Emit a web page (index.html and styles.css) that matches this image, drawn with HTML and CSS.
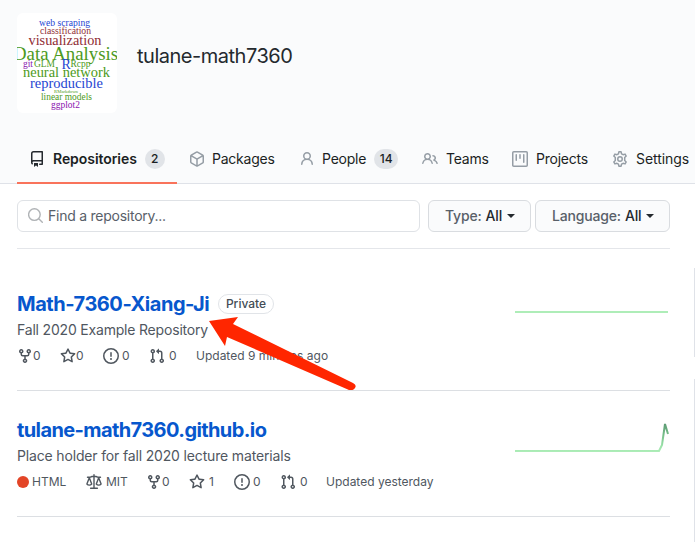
FILE: index.html
```html
<!DOCTYPE html>
<html lang="en">
<head>
<meta charset="utf-8">
<title>tulane-math7360</title>
<link rel="stylesheet" href="styles.css">
</head>
<body>
<svg class="sprite" width="0" height="0">
  <symbol id="repo" viewBox="0 0 16 16"><path fill-rule="evenodd" d="M2 2.5A2.5 2.5 0 014.5 0h8.75a.75.75 0 01.75.75v12.5a.75.75 0 01-.75.75h-2.5a.75.75 0 110-1.5h1.75v-2h-8a1 1 0 00-.714 1.7.75.75 0 01-1.072 1.05A2.495 2.495 0 012 11.5v-9zm10.5-1V9h-8c-.356 0-.694.074-1 .208V2.5a1 1 0 011-1h8zM5 12.25v3.25a.25.25 0 00.4.2l1.45-1.087a.25.25 0 01.3 0L8.6 15.7a.25.25 0 00.4-.2v-3.25a.25.25 0 00-.25-.25h-3.5a.25.25 0 00-.25.25z"/></symbol>
  <symbol id="package" viewBox="0 0 16 16"><path fill-rule="evenodd" d="M8.878.392a1.75 1.75 0 00-1.756 0l-5.25 3.045A1.75 1.75 0 001 4.951v6.098c0 .624.332 1.2.872 1.514l5.25 3.045a1.75 1.75 0 001.756 0l5.25-3.045c.54-.313.872-.89.872-1.514V4.951c0-.624-.332-1.2-.872-1.514L8.878.392zM7.875 1.69a.25.25 0 01.25 0l4.63 2.685L8 7.133 3.245 4.375l4.63-2.685zM2.5 5.677v5.372c0 .09.047.171.125.216l4.625 2.683V8.432L2.5 5.677zm6.25 8.271l4.625-2.683a.25.25 0 00.125-.216V5.677L8.75 8.432v5.516z"/></symbol>
  <symbol id="person" viewBox="0 0 16 16"><path fill-rule="evenodd" d="M10.5 5a2.5 2.5 0 11-5 0 2.5 2.5 0 015 0zm.061 3.073a4 4 0 10-5.123 0 6.004 6.004 0 00-3.431 5.142.75.75 0 001.498.07 4.5 4.5 0 018.99 0 .75.75 0 101.498-.07 6.005 6.005 0 00-3.432-5.142z"/></symbol>
  <symbol id="people" viewBox="0 0 16 16"><path fill-rule="evenodd" d="M5.5 3.5a2 2 0 100 4 2 2 0 000-4zM2 5.5a3.5 3.5 0 115.898 2.549 5.507 5.507 0 013.034 4.084.75.75 0 11-1.482.235 4.001 4.001 0 00-7.9 0 .75.75 0 01-1.482-.236A5.507 5.507 0 013.102 8.05 3.49 3.49 0 012 5.5zM11 4a.75.75 0 100 1.5 1.5 1.5 0 01.666 2.844.75.75 0 00-.416.672v.352a.75.75 0 00.574.73c1.2.289 2.162 1.2 2.522 2.372a.75.75 0 101.434-.44 5.01 5.01 0 00-2.56-3.012A3 3 0 0011 4z"/></symbol>
  <symbol id="project" viewBox="0 0 16 16"><path fill-rule="evenodd" d="M1.75 0A1.75 1.75 0 000 1.75v12.5C0 15.216.784 16 1.75 16h12.5A1.75 1.75 0 0016 14.250V1.75A1.75 1.75 0 0014.25 0H1.75zM1.5 1.75a.25.25 0 01.25-.25h12.500a.25.25 0 01.25.25v12.500a.25.25 0 01-.25.25H1.750a.25.25 0 01-.25-.25V1.750zM11.750 3a.75.75 0 00-.75.75v7.500a.75.75 0 001.500 0v-7.500a.75.75 0 00-.75-.75zm-8.250.75a.75.75 0 011.500 0v5.500a.75.75 0 01-1.500 0v-5.500zM8 3a.75.75 0 00-.75.75v3.500a.75.75 0 001.500 0v-3.500A.75.75 0 008 3z"/></symbol>
  <symbol id="gear" viewBox="0 0 16 16"><g fill="none" stroke="currentColor" stroke-width="1.5" stroke-linejoin="round"><path d="M6.900 .8h2.200l.45 2 1.550.9 1.950-.6 1.150 1.950-1.500 1.400v3.100l1.500 1.400-1.150 1.950-1.950-.6-1.550.9-.45 2H6.900l-.45-2-1.550-.9-1.950.6-1.150-1.950 1.500-1.400v-3.100l-1.500-1.400 1.150-1.950 1.950.6 1.550-.9z"/><circle cx="8" cy="8" r="2.250"/></g></symbol>
  <symbol id="search" viewBox="0 0 16 16"><path fill="none" stroke="currentColor" stroke-width="1.400" stroke-linecap="round" d="M10.500 10.500l3.800 3.800M12.200 6.600A5.800 5.800 0 11.600 6.600a5.800 5.800 0 0111.600 0z"/></symbol>
  <symbol id="fork" viewBox="0 0 16 16"><path fill-rule="evenodd" d="M5 3.250a.75.75 0 11-1.500 0 .75.75 0 011.500 0zm0 2.122a2.250 2.250 0 10-1.500 0v.878A2.250 2.250 0 005.750 8.500h1.500v2.128a2.251 2.251 0 101.500 0V8.500h1.500a2.250 2.250 0 002.250-2.250v-.878a2.250 2.250 0 10-1.500 0v.878a.75.75 0 01-.75.75h-4.500A.75.75 0 015 6.250v-.878zm3.750 7.378a.75.75 0 11-1.500 0 .75.75 0 011.500 0zm3-8.750a.75.75 0 100-1.500.75.75 0 000 1.500z"/></symbol>
  <symbol id="star" viewBox="0 0 16 16"><path fill-rule="evenodd" d="M8 .25a.75.75 0 01.673.418l1.882 3.815 4.210.612a.75.75 0 01.416 1.279l-3.046 2.970.719 4.192a.75.75 0 01-1.088.791L8 12.347l-3.766 1.980a.75.75 0 01-1.088-.790l.720-4.194L.818 6.374a.75.75 0 01.416-1.280l4.210-.611L7.327.668A.75.75 0 018 .25zm0 2.445L6.615 5.500a.75.75 0 01-.564.410l-3.097.450 2.240 2.184a.75.75 0 01.216.664l-.528 3.084 2.769-1.456a.75.75 0 01.698 0l2.770 1.456-.530-3.084a.75.75 0 01.216-.664l2.240-2.183-3.096-.450a.75.75 0 01-.564-.410L8 2.694v.001z"/></symbol>
  <symbol id="issue" viewBox="0 0 16 16"><path fill-rule="evenodd" d="M8 1.500a6.500 6.500 0 100 13 6.500 6.500 0 000-13zM0 8a8 8 0 1116 0A8 8 0 010 8zm9 3a1 1 0 11-2 0 1 1 0 012 0zm-.25-6.250a.75.75 0 00-1.500 0v3.500a.75.75 0 001.500 0v-3.500z"/></symbol>
  <symbol id="pull" viewBox="0 0 16 16"><path fill-rule="evenodd" d="M7.177 3.073L9.573.677A.25.25 0 0110 .854v4.792a.25.25 0 01-.427.177L7.177 3.427a.25.25 0 010-.354zM3.750 2.500a.75.75 0 100 1.500.75.75 0 000-1.500zm-2.250.750a2.250 2.250 0 113 2.122v5.256a2.251 2.251 0 11-1.500 0V5.372A2.250 2.250 0 011.500 3.250zM11 2.500h-1V4h1a1 1 0 011 1v5.628a2.251 2.251 0 101.500 0V5A2.500 2.500 0 0011 2.500zm1 10.250a.75.75 0 111.500 0 .75.75 0 01-1.500 0zM3.750 12a.75.75 0 100 1.500.75.75 0 000-1.500z"/></symbol>
  <symbol id="law" viewBox="0 0 16 16"><path fill="none" stroke="currentColor" stroke-width="1.400" stroke-linecap="round" stroke-linejoin="round" d="M8 .8v13M4.600 14.200h6.800M1.500 3.300h2.200L6 2.500h4l2.300.8h2.200M3.300 3.800L.9 10c1.200 1.500 3.600 1.500 4.800 0L3.300 3.800zM12.700 3.800L10.300 10c1.200 1.500 3.600 1.500 4.800 0l-2.400-6.200z"/></symbol>
</svg>

<header class="header">
  <div class="org">
    <svg class="avatar" viewBox="0 0 100 100" role="img">
      <rect width="100" height="100" fill="#fff"/>
      <g class="cloud">
        <text class="blue" x="22" y="13" font-size="10" textLength="51" lengthAdjust="spacingAndGlyphs">web scraping</text>
        <text class="maroon" x="23" y="21" font-size="9.500" textLength="51" lengthAdjust="spacingAndGlyphs">classification</text>
        <text class="maroon" x="11.500" y="32" font-size="14" textLength="73" lengthAdjust="spacingAndGlyphs">visualization</text>
        <text class="green" x="-4" y="46.500" font-size="19" textLength="105" lengthAdjust="spacingAndGlyphs">Data Analysis</text>
        <text class="purple" x="6" y="54" font-size="11" textLength="10" lengthAdjust="spacingAndGlyphs">git</text>
        <text class="green" x="17" y="54" font-size="10.500" textLength="21" lengthAdjust="spacingAndGlyphs">GLM</text>
        <text class="blue" x="44.500" y="56" font-size="14">R</text>
        <text class="green" x="53.500" y="54" font-size="10.500" textLength="20" lengthAdjust="spacingAndGlyphs">Rcpp</text>
        <text class="green" x="6" y="63.500" font-size="14.500" textLength="87" lengthAdjust="spacingAndGlyphs">neural network</text>
        <text class="blue" x="13" y="75" font-size="14.500" textLength="73" lengthAdjust="spacingAndGlyphs">reproducible</text>
        <text class="green" x="37" y="79.500" font-size="4.500" textLength="24" lengthAdjust="spacingAndGlyphs">RMarkdown</text>
        <text class="green" x="24" y="86.500" font-size="10" textLength="51" lengthAdjust="spacingAndGlyphs">linear models</text>
        <text class="purple" x="34" y="94.500" font-size="10.500" textLength="29" lengthAdjust="spacingAndGlyphs">ggplot2</text>
      </g>
    </svg>
    <h1 class="org-name">tulane-math7360</h1>
  </div>
  <nav class="tabs">
    <a class="tab selected"><svg class="icon"><use href="#repo"/></svg><span class="label">Repositories</span><span class="counter">2</span></a>
    <a class="tab"><svg class="icon"><use href="#package"/></svg><span class="label">Packages</span></a>
    <a class="tab"><svg class="icon"><use href="#person"/></svg><span class="label">People</span><span class="counter wide">14</span></a>
    <a class="tab"><svg class="icon"><use href="#people"/></svg><span class="label">Teams</span></a>
    <a class="tab"><svg class="icon"><use href="#project"/></svg><span class="label">Projects</span></a>
    <a class="tab"><svg class="icon"><use href="#gear"/></svg><span class="label last">Settings</span></a>
  </nav>
</header>

<div class="layout">
  <main class="main">
    <div class="filters">
      <div class="search"><svg class="icon"><use href="#search"/></svg><span>Find a repository...</span></div>
      <div class="btn type"><span>Type:</span><b>All</b><i class="caret"></i></div>
      <div class="btn language"><span>Language:</span><b>All</b><i class="caret"></i></div>
    </div>

    <article class="repo">
      <div class="info">
        <h3 class="title"><a class="name-a">Math-7360-Xiang-Ji</a><span class="private">Private</span></h3>
        <p class="desc desc-a">Fall 2020 Example Repository</p>
        <div class="meta meta-a">
          <span><svg class="icon"><use href="#fork"/></svg>0</span>
          <span><svg class="icon"><use href="#star"/></svg>0</span>
          <span><svg class="icon"><use href="#issue"/></svg>0</span>
          <span><svg class="icon"><use href="#pull"/></svg>0</span>
          <span>Updated 9 minutes ago</span>
        </div>
      </div>
      <svg class="spark flat" viewBox="0 0 155 34"><path d="M0 31h153" stroke="#aeedb8" stroke-width="2"/></svg>
      <svg class="arrow" viewBox="0 0 152 76"><path fill="#ff2600" d="M1 7L30 3l-5 7 120 59q4 2 2 5-2 3-6 2L19 23l-2 9z"/></svg>
    </article>

    <article class="repo">
      <div class="info">
        <h3 class="title"><a class="name-b">tulane-math7360.github.io</a></h3>
        <p class="desc desc-b">Place holder for fall 2020 lecture materials</p>
        <div class="meta meta-b">
          <span><i class="dot"></i>HTML</span>
          <span><svg class="icon"><use href="#law"/></svg>MIT</span>
          <span><svg class="icon"><use href="#fork"/></svg>0</span>
          <span><svg class="icon"><use href="#star"/></svg>1</span>
          <span><svg class="icon"><use href="#issue"/></svg>0</span>
          <span><svg class="icon"><use href="#pull"/></svg>0</span>
          <span>Updated yesterday</span>
        </div>
      </div>
      <svg class="spark" viewBox="0 0 155 34">
        <defs><linearGradient id="activity" gradientUnits="userSpaceOnUse" x1="0" y1="32" x2="0" y2="3"><stop offset="0" stop-color="#aeedb8"/><stop offset=".2" stop-color="#9be3aa"/><stop offset=".6" stop-color="#75bd88"/><stop offset="1" stop-color="#5c9874"/></linearGradient></defs>
        <path d="M0 31H144L147 25 150 4 153 14" fill="none" stroke="url(#activity)" stroke-width="2"/>
      </svg>
    </article>
  </main>
  <aside class="side"><div class="box first"></div><div class="box second"></div></aside>
</div>
</body>
</html>
```

FILE: styles.css
```css
* { box-sizing: border-box; }
body {
  margin: 0;
  width: 695px;
  height: 542px;
  overflow: hidden;
  background: #fff;
  color: #24292e;
  font: 14px/20px Inter, "Liberation Sans", sans-serif;
}
h1, h3, p { margin: 0; }
.sprite { position: absolute; }
.icon { width: 16px; height: 16px; fill: currentColor; flex: none; }

.header {
  height: 184px;
  background: #fafbfc;
  border-bottom: 1px solid #dfe2e8;
}
.org { display: flex; padding: 13px 0 0 17px; height: 135px; }
.avatar { width: 100px; height: 100px; border-radius: 6px; flex: none; }
.cloud { font-family: "Liberation Serif", serif; }
.blue { fill: #2545d2; }
.maroon { fill: #8f2d35; }
.green { fill: #4d9a22; }
.purple { fill: #8a14ae; }
.org-name { margin: 28px 0 0 20px; font-size: 20px; font-weight: 400; line-height: 30px; letter-spacing: -.48px; }

.tabs {
  display: grid;
  grid-template-columns: 160px 110px 123px 90px 100px 112px;
  margin-left: 17px;
  height: 49px;
}
.tab { display: flex; align-items: center; padding: 0 0 0 12px; border-bottom: 2px solid transparent; color: #1b1f23; letter-spacing: -.24px; }
.tab .icon { margin-right: 8px; color: #959da5; }
.tab:nth-child(2) .label { margin-left: -1px; }
.tab:nth-child(3) .icon { margin-right: 7px; }
.tab.selected { border-color: #f9735b; font-weight: 600; letter-spacing: -.06px; }
.tab.selected .icon { color: #24292e; }
.label.last { letter-spacing: -.06px; }
.counter {
  margin-left: 8px;
  width: 20px;
  height: 20px;
  border-radius: 10px;
  background: #e1e4e8;
  font-size: 12px;
  font-weight: 500;
  letter-spacing: 0;
  text-align: center;
}
.counter.wide { width: 24px; }

.layout { display: flex; justify-content: space-between; }
.main { width: 653px; margin-left: 17px; }
.filters { display: flex; height: 65px; padding-top: 16px; border-bottom: 1px solid #e4e6ea; }
.search {
  display: flex;
  align-items: center;
  width: 403px;
  height: 32px;
  padding-left: 10px;
  border: 1px solid #dfe2e6;
  border-radius: 6px;
  color: #586069;
  letter-spacing: -.25px;
}
.search .icon { margin-right: 4px; color: #b0b3b6; }
.btn {
  display: flex;
  align-items: center;
  height: 32px;
  padding-left: 16px;
  border: 1px solid #d9dce0;
  border-radius: 6px;
  background: #fafbfc;
  color: #586069;
  font-weight: 500;
  letter-spacing: -.17px;
}
.type { width: 103px; margin-left: 8px; }
.language { width: 135px; margin-left: 4px; }
.btn b { margin-left: 4px; color: #24292e; font-weight: 500; }
.caret { margin-left: 5px; border: 4px solid transparent; border-top-color: #24292e; border-bottom: 0; }

.repo { position: relative; display: flex; justify-content: space-between; height: 126px; border-bottom: 1px solid #dcdfe3; }
.repo:first-of-type { height: 142px; padding-top: 16px; }
.info { padding-top: 24px; }
.title { display: flex; align-items: center; height: 30px; font-size: 20px; line-height: 30px; font-weight: 700; color: #0757cd; }
.name-a { width: 193px; letter-spacing: -.46px; white-space: nowrap; }
.name-b { letter-spacing: -.6px; }
.private {
  width: 56px;
  height: 20px;
  margin-left: 8px;
  border: 1px solid #e1e4e8;
  border-radius: 10px;
  color: #444d56;
  font-size: 12px;
  font-weight: 500;
  line-height: 18px;
  text-align: center;
}
.desc { height: 20px; margin-top: 1px; color: #50575f; white-space: nowrap; }
.desc-a { letter-spacing: -.19px; }
.desc-b { letter-spacing: -.16px; }
.meta { display: flex; height: 18px; margin-top: 7px; color: #50575f; font-size: 12px; line-height: 18px; white-space: nowrap; }
.meta span { display: flex; align-items: center; flex: none; }
.meta-a span:nth-child(1) { width: 43px; }
.meta-a span:nth-child(2) { width: 43px; }
.meta-a span:nth-child(3) { width: 46px; gap: 3px; }
.meta-a span:nth-child(4) { width: 47px; gap: 4px; }
.meta-b span:nth-child(1) { width: 69px; gap: 3px; }
.meta-b span:nth-child(2) { width: 60px; gap: 4px; }
.meta-b span:nth-child(3) { width: 43px; }
.meta-b span:nth-child(4) { width: 45px; gap: 4px; }
.meta-b span:nth-child(5) { width: 46px; gap: 3px; }
.meta-b span:nth-child(6) { width: 46px; gap: 4px; }
.dot { width: 12px; height: 12px; border-radius: 50%; background: #e34527; }
.spark { width: 155px; height: 34px; margin-top: 29px; flex: none; }
.spark.flat { margin-top: 16px; }
.arrow { position: absolute; left: 191px; top: 65px; width: 152px; height: 76px; }

.side { width: 1px; padding-top: 84px; }
.box { background: #dfe2e8; }
.first { height: 89px; }
.second { height: 163px; margin-top: 22px; }
```
